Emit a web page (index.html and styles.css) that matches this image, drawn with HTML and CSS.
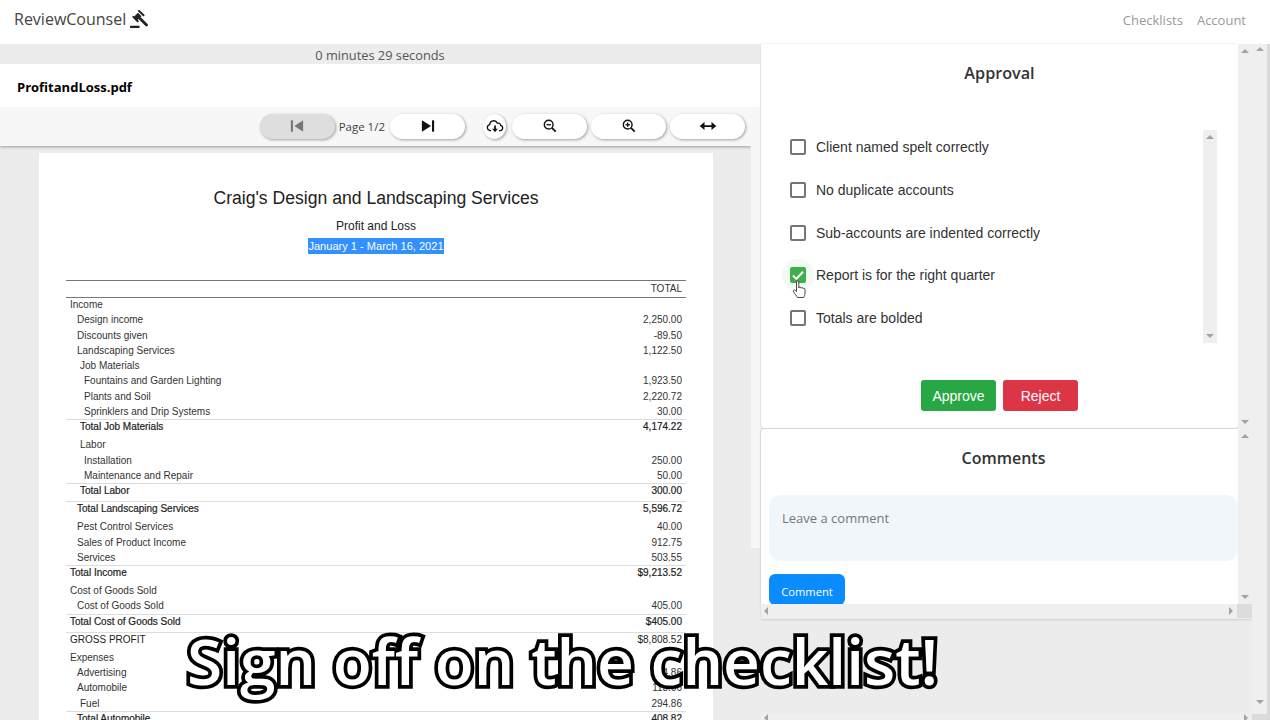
FILE: index.html
```html
<!DOCTYPE html>
<html lang="en">
<head>
<meta charset="utf-8">
<title>ReviewCounsel</title>
<link rel="stylesheet" href="styles.css">
</head>
<body>
<header class="topbar">
  <div class="brand">ReviewCounsel
    <svg class="gavel" viewBox="0 0 18 18"><path d="M9 .9L13.500 5.300" stroke="#222" stroke-width="2" stroke-linecap="round"/><path d="M4 6.700L8 2.700 11.500 6.200 7.500 10.200z"/><path d="M3.300 6.900L7.700 11.300" stroke="#222" stroke-width="2" stroke-linecap="round"/><path d="M10.300 8.800L16.500 15" stroke="#222" stroke-width="2.800" stroke-linecap="round"/><rect x="0" y="15.800" width="9.500" height="2.200" rx=".4"/></svg>
  </div>
  <nav class="nav"><span>Checklists</span><span>Account</span></nav>
</header>
<main class="main">
  <section class="left">
    <div class="timer">0 minutes 29 seconds</div>
    <div class="filebar">ProfitandLoss.pdf</div>
    <div class="viewer">
      <div class="viewer-main">
        <div class="toolbar">
          <button class="tbtn off"><svg viewBox="0 0 16 16" class="ico"><rect x="1" y="1.500" width="2.400" height="13"/><path d="M15 1.500v13L5 8z"/></svg></button>
          <span class="pageno">Page 1/2</span>
          <button class="tbtn"><svg viewBox="0 0 16 16" class="ico"><path d="M1 1.500v13L11.500 8z"/><rect x="12.600" y="1.500" width="2.400" height="13"/></svg></button>
          <button class="tbtn round"><svg viewBox="0 0 20 16" class="ico wide"><path d="M5.500 13.200H4.400a3.400 3.400 0 0 1-.5-6.700 4.600 4.600 0 0 1 8.800-1.700 2.900 2.900 0 0 1 3.800 2.500 3 3 0 0 1-.6 5.900H14.500" fill="none" stroke="#111" stroke-width="1.500"/><path d="M9 7.500h2v3.500h2.200L10 15 6.800 11H9z"/></svg></button>
          <button class="tbtn after"><svg viewBox="0 0 16 16" class="ico"><circle cx="6.500" cy="6.500" r="5" fill="none" stroke="#111" stroke-width="1.600"/><path d="M10.200 10.200L14.500 14.500" stroke="#111" stroke-width="2"/><rect x="4" y="5.800" width="5" height="1.500"/></svg></button>
          <button class="tbtn"><svg viewBox="0 0 16 16" class="ico"><circle cx="6.500" cy="6.500" r="5" fill="none" stroke="#111" stroke-width="1.600"/><path d="M10.200 10.200L14.500 14.500" stroke="#111" stroke-width="2"/><rect x="4" y="5.800" width="5" height="1.500"/><rect x="5.750" y="4" width="1.500" height="5"/></svg></button>
          <button class="tbtn"><svg viewBox="0 0 20 16" class="ico wide"><path d="M0.500 8L6 3.500V7h8V3.500L19.500 8 14 12.500V9H6v3.500z"/></svg></button>
        </div>
        <article class="sheet">
          <h1 class="co">Craig's Design and Landscaping Services</h1>
          <div class="sub">Profit and Loss</div>
          <div class="dates"><span class="sel">January 1 - March 16, 2021</span></div>
          <div class="thead">TOTAL</div>
          <div class="rows">
            <div class="row first i0"><span>Income</span></div>
            <div class="row i1"><span>Design income</span><span>2,250.00</span></div>
            <div class="row i1"><span>Discounts given</span><span>-89.50</span></div>
            <div class="row i1"><span>Landscaping Services</span><span>1,122.50</span></div>
            <div class="row i2"><span>Job Materials</span></div>
            <div class="row i3"><span>Fountains and Garden Lighting</span><span>1,923.50</span></div>
            <div class="row i3"><span>Plants and Soil</span><span>2,220.72</span></div>
            <div class="row i3"><span>Sprinklers and Drip Systems</span><span>30.00</span></div>
            <div class="row total i2"><span>Total Job Materials</span><span>4,174.22</span></div>
            <div class="row i2"><span>Labor</span></div>
            <div class="row i3"><span>Installation</span><span>250.00</span></div>
            <div class="row i3"><span>Maintenance and Repair</span><span>50.00</span></div>
            <div class="row total i2"><span>Total Labor</span><span>300.00</span></div>
            <div class="row total i1"><span>Total Landscaping Services</span><span>5,596.72</span></div>
            <div class="row i1"><span>Pest Control Services</span><span>40.00</span></div>
            <div class="row i1"><span>Sales of Product Income</span><span>912.75</span></div>
            <div class="row i1"><span>Services</span><span>503.55</span></div>
            <div class="row total i0"><span>Total Income</span><span>$9,213.52</span></div>
            <div class="row i0"><span>Cost of Goods Sold</span></div>
            <div class="row i1"><span>Cost of Goods Sold</span><span>405.00</span></div>
            <div class="row total i0"><span>Total Cost of Goods Sold</span><span>$405.00</span></div>
            <div class="row total plain i0"><span>GROSS PROFIT</span><span>$8,808.52</span></div>
            <div class="row i0"><span>Expenses</span></div>
            <div class="row i1"><span>Advertising</span><span>74.86</span></div>
            <div class="row i1"><span>Automobile</span><span>113.96</span></div>
            <div class="row i2"><span>Fuel</span><span>294.86</span></div>
            <div class="row total i1"><span>Total Automobile</span><span>408.82</span></div>
          </div>
        </article>
      </div>
      <div class="viewer-track"></div>
    </div>
  </section>
  <section class="right">
    <div class="right-top">
      <div class="cards">
        <div class="pane approval">
          <div class="card">
            <h2 class="card-title">Approval</h2>
            <div class="check-wrap">
              <ul class="checks">
                <li class="check"><span class="box"></span>Client named spelt correctly</li>
                <li class="check"><span class="box"></span>No duplicate accounts</li>
                <li class="check"><span class="box"></span>Sub-accounts are indented correctly</li>
                <li class="check"><span class="box on"><svg viewBox="0 0 16 16" class="tick"><path d="M3 8.500l3.400 3.400L13 4.800" fill="none" stroke="#fff" stroke-width="2"/></svg></span>Report is for the right quarter
                  <svg class="hand" viewBox="0 0 14 20"><path d="M4.500 2c0-1.500 2.300-1.500 2.300 0v6c.3-1.300 2.200-1.200 2.300.2.400-1 2-.8 2.100.5.500-.7 1.800-.4 1.800.8v3.500c0 2-.6 3-1.200 4.500H5.500c-.8-1.800-2.600-3.500-4-5.700-.8-1.300.8-2.500 1.800-1.400l1.200 1.300z" fill="#fff" stroke="#333" stroke-width=".9"/></svg>
                </li>
                <li class="check"><span class="box"></span>Totals are bolded</li>
              </ul>
              <div class="sb inner"><i class="up"></i><i class="down"></i></div>
            </div>
            <div class="actions">
              <button class="act approve">Approve</button>
              <button class="act reject">Reject</button>
            </div>
          </div>
          <div class="sb plain-sb"><i class="up"></i><i class="down"></i></div>
        </div>
        <div class="pane comments">
          <div class="comment-row">
            <div class="card comment-card">
              <h2 class="card-title second">Comments</h2>
              <div class="textarea">Leave a comment</div>
              <button class="send"><span>Comment</span></button>
            </div>
            <div class="sb plain-sb"><i class="up"></i><i class="down"></i></div>
          </div>
          <div class="hs"><i class="lt"></i><i class="rt"></i><b class="corner"></b></div>
        </div>
      </div>
      <div class="sb outer"><i class="up"></i><i class="down"></i></div>
    </div>
    <div class="hs bottom"><i class="lt"></i><i class="rt"></i><b class="corner"></b></div>
  </section>
  <div class="edge"></div>
</main>
<div class="caption">Sign off on the checklist!</div>
</body>
</html>
```
FILE: styles.css
```css
* { box-sizing: border-box; }
html, body { margin: 0; height: 720px; overflow: hidden; }
body { background: #ececec; font-family: "Open Sans", sans-serif; position: relative; }
.topbar { height: 44px; background: #fff; display: flex; justify-content: space-between; align-items: center; padding: 0 24px 0 14px; }
.brand { font-size: 16px; color: #444; display: flex; align-items: center; gap: 4px; margin-top: -6px; }
.gavel { width: 18px; height: 18px; fill: #222; }
.nav { display: flex; gap: 14px; font-size: 13px; color: #999; margin-top: -4px; }
.main { display: flex; height: 676px; }
.left { width: 761px; display: flex; flex-direction: column; }
.timer { height: 20px; text-align: center; font-size: 12.800px; line-height: 22px; color: #555; width: 760px; }
.filebar { height: 43px; background: #fff; padding-left: 17px; font-weight: 700; font-size: 13px; line-height: 46px; color: #000; width: 760px; }
.viewer { display: flex; flex: 1; min-height: 0; overflow: hidden; }
.viewer-main { width: 751px; overflow: hidden; }
.viewer-track { width: 9px; height: 441px; background: #f7f7f7; }
.toolbar { height: 39px; background: #f7f7f7; box-shadow: 0 1px 3px rgba(0,0,0,.35); display: flex; align-items: center; justify-content: flex-end; padding: 0 6px 0 0; position: relative; }
.tbtn { width: 75px; height: 25px; margin: 0 0 1px 4px; padding: 0; border: 0; border-radius: 13px; background: #fff; box-shadow: 1px 1px 3px rgba(0,0,0,.35); display: flex; align-items: center; justify-content: center; }
.tbtn.off { background: #dedede; }
.tbtn.off .ico { fill: #777; }
.tbtn.round { width: 23px; margin-left: 18px; border-radius: 50%; }
.tbtn.after { margin-left: 6px; }
.ico { width: 14px; height: 14px; fill: #111; }
.ico.wide { width: 20px; }
.pageno { font-size: 11.500px; color: #444; margin: 0 1px 0 4px; }
.sheet { width: 674px; height: 600px; margin: 7px 0 0 39px; background: #fff; padding: 0 27px; font-family: "Liberation Sans", Arial, sans-serif; color: #333; }
.co { margin: 0; padding-top: 35px; text-align: center; font-weight: 400; font-size: 17.600px; line-height: 21px; color: #222; }
.sub { margin-top: 9px; text-align: center; font-size: 12px; line-height: 16px; color: #222; }
.dates { margin-top: 4px; text-align: center; font-size: 11.050px; line-height: 16px; }
.sel { background: #3390ff; color: #fff; display: inline-block; }
.thead { margin-top: 26px; height: 18px; border-top: 1px solid #777; border-bottom: 1px solid #777; text-align: right; font-size: 10px; line-height: 15px; padding: 0 4px; }
.rows { font-size: 10px; }
.row { display: flex; justify-content: space-between; height: 15.300px; line-height: 15.300px; padding-right: 4px; }
.row.first { margin-top: -1px; }
.row.i0 { padding-left: 4px; }
.row.i1 { padding-left: 11px; }
.row.i2 { padding-left: 14px; }
.row.i3 { padding-left: 18px; }
.row.total { height: 18px; border-top: 1px solid #ddd; line-height: 14px; color: #222; -webkit-text-stroke: .2px #222; }
.row.plain { -webkit-text-stroke: 0; }
.right { width: 506px; display: flex; flex-direction: column; }
.right-top { flex: 1; display: flex; min-height: 0; }
.cards { width: 491px; display: flex; flex-direction: column; }
.pane { display: flex; }
.approval { height: 385px; }
.card { width: 477px; background: #fff; border-radius: 0 0 4px 4px; box-shadow: 0 0 2px rgba(0,0,0,.15); }
.approval .card { height: 384px; padding-top: 18px; }
.card-title { margin: 0; text-align: center; font-size: 16.200px; font-weight: 600; line-height: 22px; color: #333; }
.second { font-size: 16px; }
.check-wrap { display: flex; justify-content: space-between; width: 456px; height: 213px; margin-top: 46px; position: relative; z-index: 0; }
.checks { list-style: none; margin: -4px 0 0; padding: 0 0 0 29px; }
.check { height: 42.700px; display: flex; align-items: center; font-family: "Liberation Sans", Arial, sans-serif; font-size: 14px; color: #333; position: relative; gap: 10px; }
.box { width: 16px; height: 16px; border: 2px solid #757575; border-radius: 2px; flex: none; position: relative; }
.box.on { background: #3fae4d; border-color: #3fae4d; }
.box.on::before { content: ""; position: absolute; left: -10px; top: -10px; width: 32px; height: 32px; border-radius: 50%; background: #f3f9f3; z-index: -1; }
.tick { position: absolute; left: -2px; top: -2px; width: 16px; height: 16px; }
.hand { position: absolute; left: 2px; top: 26px; width: 14px; height: 20px; }
.actions { display: flex; justify-content: center; gap: 7px; margin-top: 37px; }
.act { width: 75px; height: 31px; padding: 0; border: 0; border-radius: 3px; color: #fff; font-family: "Liberation Sans", Arial, sans-serif; font-size: 14px; }
.approve { background: #28a745; }
.reject { background: #dc3545; }
.sb { width: 14px; background: #efefef; display: flex; flex-direction: column; justify-content: space-between; align-items: center; padding: 5px 0; }
.up { width: 0; height: 0; border: 4px solid transparent; border-top: 0; border-bottom: 4px solid #a3a3a3; }
.down { width: 0; height: 0; border: 4px solid transparent; border-bottom: 0; border-top: 4px solid #a3a3a3; }
.lt { width: 0; height: 0; border: 4px solid transparent; border-left: 0; border-right: 4px solid #a3a3a3; }
.rt { width: 0; height: 0; border: 4px solid transparent; border-right: 0; border-left: 4px solid #a3a3a3; margin-left: auto; margin-right: 4px; }
.inner { height: 213px; }
.comments { flex-direction: column; height: 190px; box-shadow: 0 1px 2px rgba(0,0,0,.12); }
.comment-row { display: flex; height: 175px; }
.comment-card { border-radius: 4px 0 0 0; height: 175px; padding: 18px 0 0 8px; overflow: hidden; }
.textarea { height: 66px; width: 469px; margin-top: 26px; background: #f1f6fa; border-radius: 12px; padding: 14px 13px; font-size: 13px; color: #777; line-height: 18px; }
.send { display: block; width: 76px; height: 31px; margin-top: 13px; padding: 0; border: 0; border-radius: 6px; background: #0a8cff; color: #fff; font-family: "Open Sans", sans-serif; font-size: 11.200px; }
.send span { position: relative; top: 2px; }
.hs { height: 14px; background: #efefef; display: flex; align-items: center; padding: 0 0 0 3px; }
.comments .hs { width: 491px; }
.corner { width: 15px; height: 14px; background: #dcdcdc; flex: none; }
.outer { width: 15px; padding: 3px 0 10px; }
.bottom { height: 6px; align-items: flex-start; }
.bottom .corner { height: 6px; }
.edge { width: 3px; height: 676px; background: #d9d9d9; }
.caption { position: absolute; left: 187px; top: 621px; font-family: "Open Sans", sans-serif; font-weight: 600; font-size: 64px; line-height: 80px; color: #fff; -webkit-text-stroke: 7.500px #000; paint-order: stroke fill; white-space: nowrap; }
```
